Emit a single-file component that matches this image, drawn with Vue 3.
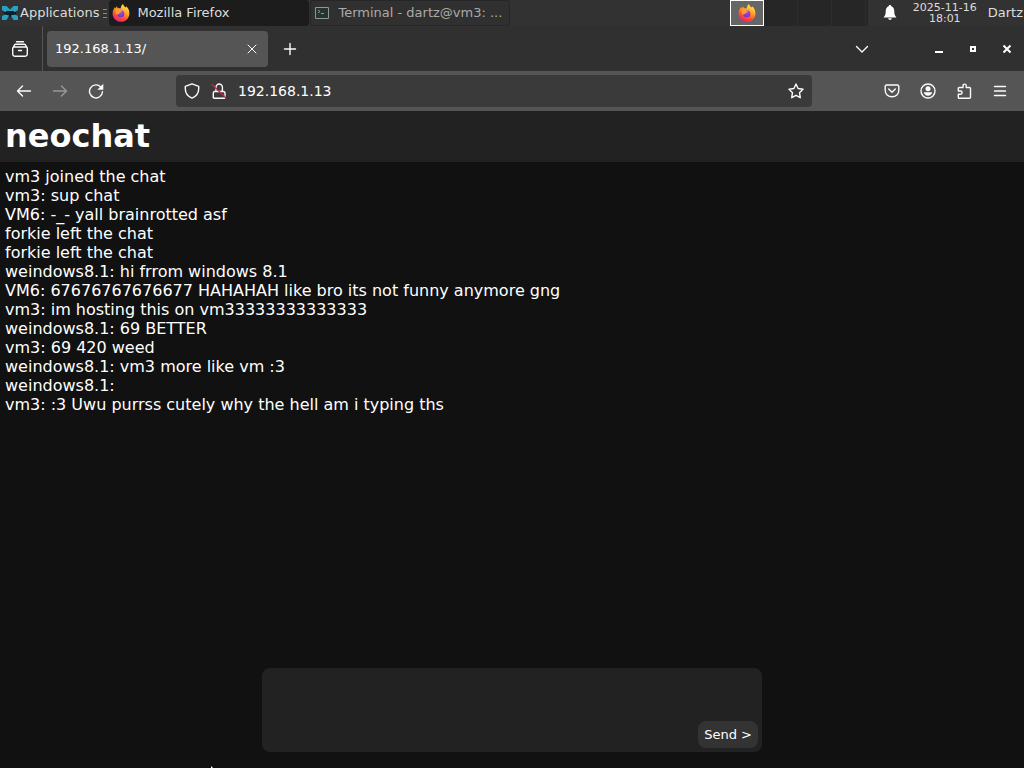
<template>
  <div class="desktop">
    <svg class="sprite" width="0" height="0" aria-hidden="true">
      <defs>
        <linearGradient id="flame" x1="0.8" y1="0" x2="0.3" y2="1">
          <stop offset="0" stop-color="#fff04e" />
          <stop offset="0.4" stop-color="#ffa62b" />
          <stop offset="0.7" stop-color="#ff5035" />
          <stop offset="1" stop-color="#e8207a" />
        </linearGradient>
        <radialGradient id="globe" cx="0.5" cy="0.3" r="0.7">
          <stop offset="0" stop-color="#b04ce0" />
          <stop offset="1" stop-color="#6a35b8" />
        </radialGradient>
        <symbol id="firefox" viewBox="0 0 18 18">
          <path fill="url(#flame)" d="M11 0c.3 1.6 1.500 2.300 2.600 3.400.5-.3.600-.7.600-1.200 2 1.700 3.300 4.200 3.200 7.200-.1 4.700-3.800 8.300-8.400 8.300S.6 14.100.6 9.400c0-2.500 1-4.800 2.400-6.500l.5 1.500L5 2.300l.7 2c1.200-.3 2.300-.1 3 .3C8.800 2.700 9.600 1 11 0z" />
          <circle cx="8.800" cy="9.800" r="3.500" fill="url(#globe)" />
          <path fill="#ffa02d" d="M4 6.200c1.500-1.100 3.600-.9 4.700.4l1.400.5c-.2 1-1.600 1.300-2.300 1.700-.5.300-.4 1-1 1.300-1 .6-2-.1-2.400.4C3.500 9 3.500 7.500 4 6.200z" />
        </symbol>
      </defs>
    </svg>

    <header class="panel">
      <button class="apps">
        <svg width="16" height="16" viewBox="0 0 16 16" aria-hidden="true">
          <path fill="#0b1c22" d="M2 4h12v8H2z" />
          <path fill="#2b9fc0" d="M0 1h4.500L8 4.500 11.500 1H16v4l-3 2H3L0 5zM0 15v-4l3-1.500h3L7 11l-2.500 4zM16 15v-4l-3-1.500h-3L9 11l2.500 4z" />
          <path fill="#0b2128" d="M4 6h8v4H4z" />
        </svg>
        Applications
      </button>
      <span class="handle"></span>
      <nav class="tasks" aria-label="Windows">
        <button class="task active">
          <svg width="18" height="18" aria-hidden="true"><use href="#firefox" /></svg>
          <span>Mozilla Firefox</span>
        </button>
        <button class="task">
          <svg width="18" height="18" viewBox="0 0 18 18" aria-hidden="true">
            <path fill="#273330" stroke="#8d9995" d="M2.500 3.500h13v11h-13z" />
            <path fill="none" stroke="#8d9995" d="M5 6l2 1.500L5 9M8 9.500h3" />
          </svg>
          <span>Terminal - dartz@vm3: ...</span>
        </button>
      </nav>
      <div class="pager">
        <button v-for="n in 4" :key="n" :class="{ current: n === 1 }" :aria-label="'Workspace ' + n">
          <svg v-if="n === 1" width="18" height="18" aria-hidden="true"><use href="#firefox" /></svg>
        </button>
      </div>
      <button class="bell" aria-label="Notifications">
        <svg width="14" height="16" viewBox="0 0 14 16" aria-hidden="true">
          <path fill="#fff" d="M7 0c.8 0 1.300.5 1.300 1.300C10.500 2 11.300 4 11.300 6.500c0 3 .7 4.500 2.200 6H.5c1.500-1.500 2.200-3 2.200-6C2.700 4 3.500 2 5.700 1.300 5.700.5 6.200 0 7 0zM5.200 13.300h3.600C8.600 14.400 8 15 7 15s-1.600-.6-1.800-1.700z" />
        </svg>
      </button>
      <time class="clock">2025-11-16<br />18:01</time>
      <button class="user">Dartz</button>
    </header>

    <section class="tabbar">
      <div class="view">
        <button aria-label="View">
          <svg class="icon" width="18" height="18" viewBox="0 0 18 18"><path d="M5.500 1.700h7M2.500 6.800l.8-1.600a1.800 1.800 0 0 1 1.600-1h8.200a1.800 1.800 0 0 1 1.600 1l.8 1.600M3 7h12a1.300 1.300 0 0 1 1.300 1.300V14a2.300 2.300 0 0 1-2.300 2.300H4A2.300 2.300 0 0 1 1.700 14V8.300A1.300 1.300 0 0 1 3 7zM7.500 10.500h3" /></svg>
        </button>
      </div>
      <div class="tab">
        <span>192.168.1.13/</span>
        <button aria-label="Close tab">
          <svg class="icon thin" width="10" height="10" viewBox="0 0 10 10"><path d="M1 1l8 8M9 1L1 9" /></svg>
        </button>
      </div>
      <button class="tool" aria-label="New tab">
        <svg class="icon" width="14" height="14" viewBox="0 0 14 14"><path d="M7 1.500v11M1.500 7h11" /></svg>
      </button>
      <button class="tool list" aria-label="List tabs">
        <svg class="icon" width="14" height="14" viewBox="0 0 14 14"><path d="M1.500 4.500L7 10l5.500-5.500" /></svg>
      </button>
      <div class="controls">
        <button aria-label="Minimize">
          <svg width="10" height="10" viewBox="0 0 10 10"><path fill="#fff" d="M1 7h8v2H1z" /></svg>
        </button>
        <button aria-label="Maximize">
          <svg width="10" height="10" viewBox="0 0 10 10"><path fill="none" stroke="#fff" stroke-width="2" d="M3 3h4v4H3z" /></svg>
        </button>
        <button aria-label="Close">
          <svg width="10" height="10" viewBox="0 0 10 10"><path stroke="#fff" stroke-width="2" d="M1.500 1.500l7 7M8.500 1.500l-7 7" /></svg>
        </button>
      </div>
    </section>

    <section class="navbar">
      <button class="tool" aria-label="Back">
        <svg class="icon" width="16" height="16" viewBox="0 0 16 16"><path d="M14.500 8h-13M6.500 3l-5 5 5 5" /></svg>
      </button>
      <button class="tool" aria-label="Forward" disabled>
        <svg class="icon" width="16" height="16" viewBox="0 0 16 16"><path d="M1.500 8h13M9.500 3l5 5-5 5" /></svg>
      </button>
      <button class="tool" aria-label="Reload">
        <svg class="icon" width="16" height="16" viewBox="0 0 16 16"><path d="M12.800 4A6.500 6.500 0 1 0 14.500 8.800" /><path class="solid" d="M15.300.8v6H9.300z" /></svg>
      </button>
      <form class="urlbar" @submit.prevent>
        <svg class="icon" width="16" height="16" viewBox="0 0 16 16"><path d="M8 .8l6.700 2.500v2.500c0 4-2.200 7.500-6.700 9.400C3.500 13.300 1.300 9.800 1.300 5.800V3.300z" /></svg>
        <svg class="icon" width="16" height="16" viewBox="0 0 16 16"><path d="M5 8V4.200a3.200 3.200 0 0 1 6.400 0V8M3.800 8.500h8.700a1.500 1.500 0 0 1 1.500 1.500v4.500a.7.700 0 0 1-.7.700H3a.7.700 0 0 1-.7-.7V10a1.500 1.500 0 0 1 1.500-1.500z" /><path class="slash" d="M1 1.500l13.500 13" /></svg>
        <input v-model="url" aria-label="Address" />
        <button aria-label="Bookmark">
          <svg class="icon" width="16" height="16" viewBox="0 0 16 16"><path d="M8 1l2.100 4.500 4.900.7-3.500 3.500.8 5L8 12.300l-4.300 2.400.8-5L1 6.200l4.900-.7z" /></svg>
        </button>
      </form>
      <button class="tool" aria-label="Save">
        <svg class="icon" width="16" height="16" viewBox="0 0 16 16"><path d="M2.500 2h11a1.300 1.300 0 0 1 1.300 1.300v4C14.800 11 12 13.800 8 13.800S1.200 11 1.200 7.300v-4A1.300 1.300 0 0 1 2.500 2zM4.700 6L8 9.200 11.300 6" /></svg>
      </button>
      <button class="tool" aria-label="Account">
        <svg class="icon" width="16" height="16" viewBox="0 0 16 16"><circle cx="8" cy="8" r="7" /><circle class="solid" cx="8" cy="5.800" r="2.500" /><path class="solid" d="M3.800 9.300h8.400c-.4 2.200-2 3.400-4.200 3.400s-3.800-1.200-4.200-3.400z" /></svg>
      </button>
      <button class="tool" aria-label="Extensions">
        <svg class="icon" width="16" height="16" viewBox="0 0 16 16"><path d="M7 4.500V2.700a1.600 1.600 0 0 1 3.200 0v1.800h3.300a1 1 0 0 1 1 1v8.700a1 1 0 0 1-1 1H3.300a1 1 0 0 1-1-1v-3h2.200a1.600 1.600 0 0 0 0-3.200H2.300V5.500a1 1 0 0 1 1-1z" /></svg>
      </button>
      <button class="tool" aria-label="Menu">
        <svg class="icon" width="16" height="16" viewBox="0 0 16 16"><path d="M2.500 3.500h11M2.500 8h11M2.500 12.500h11" /></svg>
      </button>
    </section>

    <h1>neochat</h1>
    <main class="chat">
      <p v-for="(message, i) in messages" :key="i">{{ message }}</p>
    </main>
    <form class="composer" @submit.prevent="send">
      <textarea v-model="draft" aria-label="Message"></textarea>
      <button>Send &gt;</button>
    </form>
    <svg class="pointer" width="4" height="2" viewBox="0 0 4 2" aria-hidden="true"><path fill="#fff" d="M1 0l2 2H1z" /></svg>
  </div>
</template>

<script setup>
import { ref } from 'vue';

const url = ref('192.168.1.13');
const draft = ref('');

const messages = ref([
  'vm3 joined the chat',
  'vm3: sup chat',
  'VM6: -_- yall brainrotted asf',
  'forkie left the chat',
  'forkie left the chat',
  'weindows8.1: hi frrom windows 8.1',
  'VM6: 67676767676677 HAHAHAH like bro its not funny anymore gng',
  'vm3: im hosting this on vm33333333333333',
  'weindows8.1: 69 BETTER',
  'vm3: 69 420 weed',
  'weindows8.1: vm3 more like vm :3',
  'weindows8.1:',
  'vm3: :3 Uwu purrss cutely why the hell am i typing ths',
]);

const send = () => {
  messages.value.push('vm3: ' + draft.value);
  draft.value = '';
};
</script>

<style>
body {
  background: #111;
}
</style>

<style scoped>
.desktop {
  position: relative;
  display: flex;
  flex-direction: column;
  min-height: 100vh;
  overflow: hidden;
  background: #111;
  color: #fff;
  font-family: "DejaVu Sans", sans-serif;
  font-size: 13px;
}

.sprite {
  position: absolute;
}

button,
input,
textarea {
  margin: 0;
  padding: 0;
  border: none;
  outline: none;
  background: none;
  color: inherit;
  font: inherit;
}

button {
  display: flex;
  align-items: center;
  justify-content: center;
  flex-shrink: 0;
}

.icon {
  flex-shrink: 0;
  fill: none;
  stroke: #fbfbfe;
  stroke-width: 1.4;
  stroke-linecap: round;
  stroke-linejoin: round;
}

.icon.thin {
  stroke-width: 1;
}

.icon .solid {
  fill: #fbfbfe;
  stroke: none;
}

.icon .slash {
  stroke: #c02848;
}

.panel {
  display: flex;
  height: 26px;
  background: #323232;
  color: #ddd;
}

.panel button {
  padding-bottom: 1px;
}

.apps {
  gap: 2px;
  padding-left: 2px;
}

.handle {
  align-self: center;
  width: 4px;
  height: 9px;
  margin: 0 2px 0 4px;
  background: repeating-linear-gradient(#888 0 1px, transparent 1px 4px);
}

.tasks {
  display: flex;
  flex: 1;
  gap: 1px;
  min-width: 0;
}

.task {
  box-sizing: border-box;
  flex: 0 1 200px;
  justify-content: flex-start;
  gap: 7px;
  min-width: 0;
  padding-left: 2px;
  border: 1px solid #262626;
  border-radius: 3px;
  background: #303030;
  color: #aaa;
  white-space: nowrap;
}

.task.active {
  border-color: #1c1c1c;
  background: #1c1c1c;
  color: #ddd;
}

.pager {
  display: flex;
  margin-right: 4px;
  padding-right: 2px;
  background: #262626;
}

.pager button {
  box-sizing: border-box;
  width: 34px;
  border-right: 1px solid #2d2d2d;
}

.pager .current {
  border: 1px solid #fff;
  background: #666;
}

.bell {
  width: 36px;
}

.clock {
  align-self: center;
  margin: 0 11px 0 5px;
  font-size: 11px;
  line-height: 11px;
  text-align: center;
}

.user {
  padding-right: 1px;
}

.tabbar {
  display: flex;
  align-items: center;
  height: 45px;
  background: #303030;
}

.view {
  display: flex;
  align-self: stretch;
  padding: 0 13px 0 11px;
  border-right: 1px solid #555;
}

.tab {
  box-sizing: border-box;
  display: flex;
  align-items: center;
  justify-content: space-between;
  flex: 0 1 221px;
  height: 36px;
  margin: 0 4px;
  padding: 0 11px 0 8px;
  border-radius: 4px;
  background: #555;
}

.tool {
  width: 36px;
  height: 32px;
}

.tool:disabled {
  opacity: 0.4;
}

.list {
  margin-left: auto;
  margin-right: 42px;
}

.controls {
  display: flex;
}

.controls button {
  width: 34px;
  height: 32px;
}

.navbar {
  display: flex;
  align-items: center;
  height: 40px;
  padding: 0 6px;
  background: #555;
}

.urlbar {
  display: flex;
  align-items: center;
  flex: 1;
  gap: 11px;
  height: 32px;
  min-width: 0;
  margin: 0 62px;
  padding: 0 8px;
  border-radius: 4px;
  background: #3a3a3a;
}

.urlbar input {
  flex: 1;
  min-width: 0;
  font-size: 14px;
}

h1 {
  margin: 0;
  padding: 6px 5px 7px;
  background: #222;
  font-size: 32px;
  line-height: 38px;
}

.chat {
  flex: 1;
  padding: 5px;
  font-size: 16px;
  line-height: 19px;
}

.chat p {
  margin: 0;
}

.composer {
  box-sizing: border-box;
  display: flex;
  align-items: flex-end;
  width: 500px;
  max-width: 100%;
  margin: 0 auto 16px;
  padding: 4px;
  border-radius: 8px;
  background: #222;
}

.composer textarea {
  flex: 1;
  min-width: 0;
  height: 76px;
  resize: none;
}

.composer button {
  padding: 6px;
  border-radius: 8px;
  background: #333;
}

.pointer {
  position: absolute;
  bottom: 0;
  left: 210px;
}
</style>
